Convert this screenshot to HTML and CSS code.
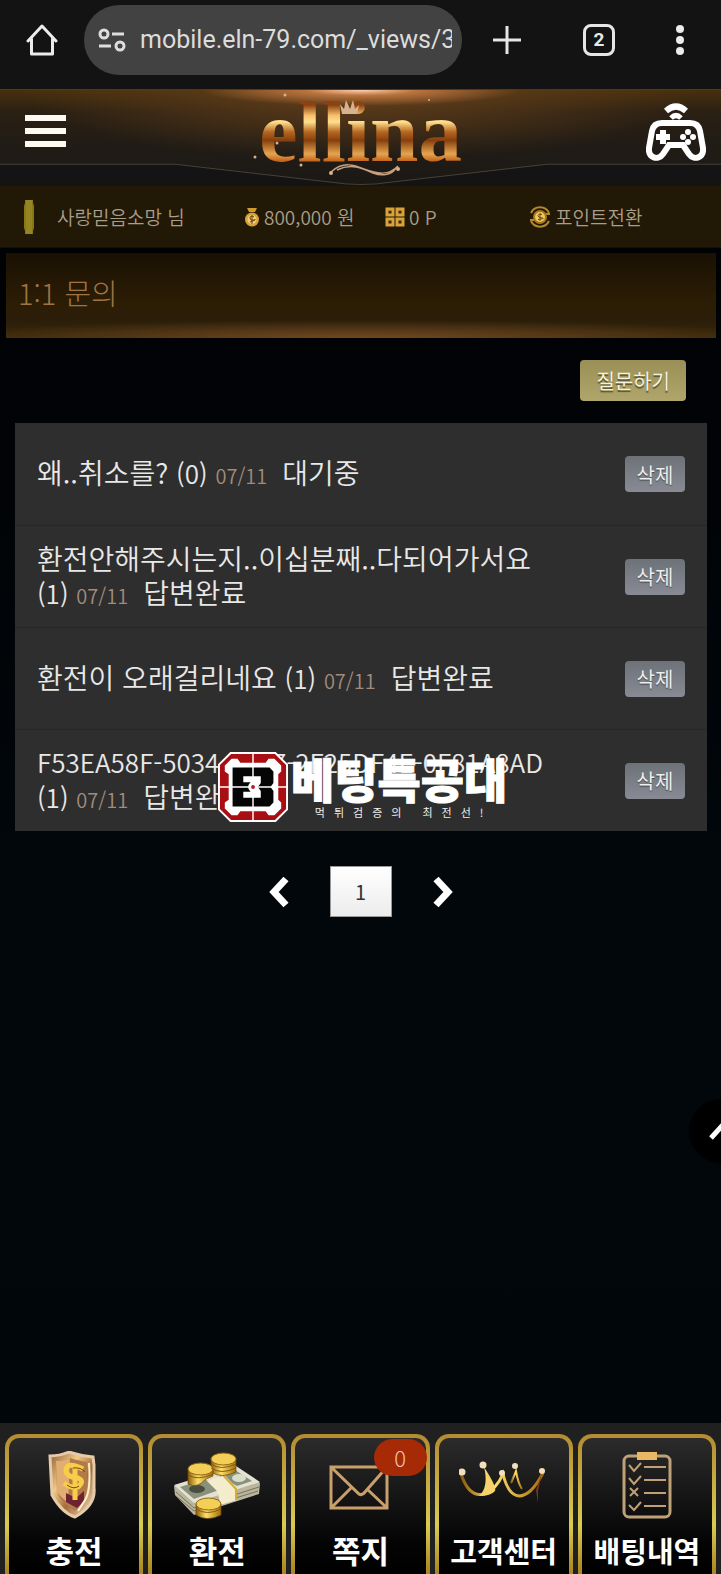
FILE: index.html
```html
<!DOCTYPE html>
<html lang="ko">
<head>
<meta charset="utf-8">
<meta name="viewport" content="width=device-width, initial-scale=1">
<title>1:1 문의</title>
<link rel="stylesheet" href="styles.css">
</head>
<body>
<div class="browser">
  <button class="icon-btn" aria-label="홈"><svg width="32" height="32" viewBox="0 0 32 32" fill="none" stroke="#ececec" stroke-width="3" stroke-linejoin="round" stroke-linecap="round"><path d="M2 17 16 2l14 15M5.500 15v15h21V15"/></svg></button>
  <div class="address">
    <svg width="28" height="24" viewBox="0 0 28 24" fill="none" stroke="#dedede" stroke-width="3"><circle cx="6" cy="6" r="4"/><path d="M14 6h12M1 18h12"/><circle cx="22" cy="18" r="4"/></svg>
    <input class="url" type="text" aria-label="주소" value="mobile.eln-79.com/_views/3">
  </div>
  <div class="browser-tools">
    <button class="icon-btn" aria-label="새 탭"><svg width="30" height="30" viewBox="0 0 30 30" stroke="#e6e6e6" stroke-width="3"><path d="M15 1v28M1 15h28"/></svg></button>
    <button class="icon-btn tabs">2</button>
    <button class="icon-btn" aria-label="메뉴"><svg width="8" height="30" viewBox="0 0 8 30" fill="#ececec"><circle cx="4" cy="4" r="4"/><circle cx="4" cy="15" r="4"/><circle cx="4" cy="26" r="4"/></svg></button>
  </div>
</div>

<header class="top">
  <svg class="top-lines" viewBox="0 0 721 97" preserveAspectRatio="none" aria-hidden="true"><path d="M0 75H175L330 93Q361 97 392 93L547 75H721V97H0Z" fill="#141414"/><path d="M0 75H175L330 93Q361 98 392 93L547 75H721" fill="none" stroke="#4a4038" stroke-width="1"/></svg>
  <button class="icon-btn" aria-label="전체 메뉴"><svg width="42" height="34" viewBox="0 0 42 34" fill="#fdfaf2"><path d="M0 0h41v6H0zM0 13h41v6H0zM0 26h41v6H0z"/></svg></button>
  <a class="logo" href="#"><span class="logo-text">ellina</span>
    <svg class="logo-art" viewBox="0 0 230 92" aria-hidden="true"><g fill="none" stroke="#c8a080"><path d="M82 82c12-11 24-7 33-3 13 5 25 7 34-3M88 80c14-7 25-2 36 3 8 3 18 3 23-5" stroke-width="1.500"/></g><g fill="#d8b28e"><path d="m91 14 4 5 2-9 4 9 3-9 2 9 4-4-2 9H93z"/><circle cx="82" cy="83" r="2"/><circle cx="149" cy="79" r="2"/><circle cx="36" cy="5" r="1.500"/><circle cx="6" cy="67" r="1.500"/><circle cx="52" cy="75" r="1.500"/><circle cx="180" cy="10" r="1"/><circle cx="28" cy="53" r="1.500"/></g></svg>
  </a>
  <button class="icon-btn" aria-label="게임"><svg width="60" height="58" viewBox="0 0 60 58" fill="none" stroke="#fff"><path d="M16 20H44C50 20 53 23 54 28L57 45C58 55 48 58 43 51L37 42H23L17 51C12 58 2 55 3 45L6 28C7 23 10 20 16 20Z" stroke-width="6"/><path d="M17 27v14M10 34h14" stroke-width="6"/><path d="M20 8Q30-1 40 8" stroke-width="6"/><path d="M25 15Q30 10 35 15" stroke-width="5"/><g fill="#fff" stroke="none"><circle cx="42" cy="29" r="3"/><circle cx="42" cy="39" r="3"/><circle cx="37" cy="34" r="3"/><circle cx="47" cy="34" r="3"/></g></svg></button>
</header>

<div class="info">
  <div class="info-item"><svg width="12" height="36" viewBox="0 0 12 36"><path d="M2 1h8v3l1 3v22l-1 3v3H2v-3l-1-3V7l1-3z" fill="#887713"/><path d="M3 1h6v34H3z" fill="#a19432" opacity=".5"/></svg><span class="member">사랑믿음소망 님</span></div>
  <div class="info-item"><svg width="16" height="20" viewBox="0 0 16 20"><path d="M3 1h10l-2 4H5z" fill="#d19b2b"/><circle cx="8" cy="12.500" r="7" fill="#d7a13c"/><circle cx="8" cy="12.500" r="4.500" fill="#f1cd73"/><path d="M10 10q-4-2-4 1t4 2-4 2M8 8v9" fill="none" stroke="#6b4208"/></svg><span>800,000 원</span></div>
  <div class="info-item"><svg width="20" height="20" viewBox="0 0 20 20"><g fill="#3b2707" stroke="#d9a33c" stroke-width="3"><path d="M2 2h6v6H2zM12 2h6v6h-6zM2 12h6v6H2zM12 12h6v6h-6z"/></g><g fill="#c99332"><circle cx="5" cy="3" r="1"/><circle cx="15" cy="3" r="1"/></g></svg><span>0 P</span></div>
  <a class="info-item" href="#"><svg width="22" height="22" viewBox="0 0 22 22" fill="none" stroke="#b4882c" stroke-width="2"><path d="M2 7A10 10 0 0 1 20 7M2 15a10 10 0 0 0 18 0M17 8h4M1 14h4"/><circle cx="11" cy="11" r="6" fill="#efc660" stroke="#a87719"/><path d="M13 8.500q-4-1-4 1t4 2.500-4 1.500M11 7v8" stroke="#6b4c10" stroke-width="1"/></svg><span>포인트전환</span></a>
</div>

<main class="main">
  <h1 class="title">1:1 문의</h1>
  <div class="actions"><button class="ask">질문하기</button></div>
  <div class="board">
    <ul class="list">
      <li class="row"><a class="subject" href="#">왜..취소를? <span class="latin">(0)</span> <span class="date">07/11</span><span class="state">대기중</span></a><button class="del">삭제</button></li>
      <li class="row"><a class="subject" href="#">환전안해주시는지..이십분째..다되어가서요 <span class="latin">(1)</span> <span class="date">07/11</span><span class="state">답변완료</span></a><button class="del">삭제</button></li>
      <li class="row"><a class="subject" href="#">환전이 오래걸리네요 <span class="latin">(1)</span> <span class="date">07/11</span><span class="state">답변완료</span></a><button class="del">삭제</button></li>
      <li class="row"><a class="subject" href="#"><span class="latin">F53EA58F-5034-4E17-2F25DF4E-0F81A8AD</span> <span class="latin">(1)</span> <span class="date">07/11</span><span class="state">답변완료</span></a><button class="del">삭제</button></li>
    </ul>
    <div class="mark">
      <svg width="70" height="70" viewBox="0 0 72 72"><path d="M13 1h46l12 12v46L59 71H13L1 59V13z" fill="#a90e12" stroke="#fff" stroke-width="2"/><path d="M14 7h6l3 4h26l3-4h6l7 7v6l-3 3v26l3 3v6l-7 7h-6l-3-4H23l-3 4h-6l-7-7v-6l4-3V23l-4-3v-6z" fill="#fff"/><path d="M15 16h38l4 4v12l-3 4 3 4v12l-4 4H15z" fill="#050505"/><path d="M26 25h18v7l-3 4 3 4v7H26v-6h7l3-5-3-5h-7z" fill="#fff"/><path d="M36 0v26M36 46v26M0 36h72" stroke="#fff" stroke-width="1.500"/><circle cx="36" cy="36" r="5" fill="#fff"/><circle cx="36" cy="36" r="2" fill="#c01530"/></svg>
      <div class="mark-words"><strong class="mark-name">베팅특공대</strong><span class="mark-tag">먹튀검증의 최전선!</span></div>
    </div>
  </div>
  <nav class="pager" aria-label="페이지">
    <button class="icon-btn" aria-label="이전"><svg width="20" height="32" viewBox="0 0 20 32" fill="none" stroke="#fff" stroke-width="7"><path d="M17 3 5 16l12 13"/></svg></button>
    <a class="page" href="#" aria-current="page">1</a>
    <button class="icon-btn" aria-label="다음"><svg width="20" height="32" viewBox="0 0 20 32" fill="none" stroke="#fff" stroke-width="7"><path d="m3 3 12 13L3 29"/></svg></button>
  </nav>
</main>

<button class="to-top" aria-label="맨 위로"><svg width="24" height="18" viewBox="0 0 24 18" fill="none" stroke="#fff" stroke-width="5"><path d="M2 16 12 5l10 11"/></svg></button>

<nav class="bottom" aria-label="바로가기">
  <a class="tile" href="#"><svg class="art" viewBox="0 0 90 68"><defs><linearGradient id="shield" x1="0" x2="1" y2="1"><stop stop-color="#8c6038"/><stop offset=".35" stop-color="#f2c985"/><stop offset=".6" stop-color="#a36a38"/><stop offset="1" stop-color="#fff0cd"/></linearGradient><linearGradient id="gold" x1="0" x2="1"><stop stop-color="#8a5a0c"/><stop offset=".4" stop-color="#ffe06a"/><stop offset="1" stop-color="#a36e0d"/></linearGradient></defs><path d="M21 5q10 0 19-4 12 4 24 5l1 8v23q2 17-19 29-13-4-23-22z" fill="url(#shield)" stroke="#e5cbaa" stroke-width="3"/><path d="M27 10q8 0 14-3 10 3 17 4v25q0 14-12 24-12-7-18-18z" fill="#b27a49"/><path d="M27 10q8 0 14-3l-2 45-11-10z" fill="#e0ae72"/><path d="M37 42l10 5 8-7v10l-7 7-11-6z" fill="#6d2233"/><path d="M54 18q-16-8-17 1 0 7 12 8 7 3 0 9-6 2-14-4M46 13v36" fill="none" stroke="#f7ce4a" stroke-width="5"/><path d="M56 21q-4-5-12-4M38 34q7 5 12 1" fill="none" stroke="#77430e" stroke-width="1"/><path d="M60 12q2 28-4 37l-7 11" fill="none" stroke="#fff0d0" stroke-width="2"/></svg><span class="label">충전</span></a>
  <a class="tile" href="#"><svg class="art" viewBox="0 0 90 68"><path d="m2 35 62-19 24 16-1 11-65 21-19-20z" fill="#b9b69d"/><path d="m2 34 62-19 24 16-66 21z" fill="#e4e2d2"/><path d="m8 36 25-8 14 11-25 9zM58 19l5 0 17 11-15 5-18-10z" fill="#89917d"/><ellipse cx="25" cy="38" rx="8" ry="4" fill="#474e40"/><ellipse cx="67" cy="27" rx="7" ry="4" fill="#d9decb"/><path d="m4 41 18 16 65-21M4 45l18 15 64-20" fill="none" stroke="#77745f" stroke-width="1"/><path d="m35 30 18-6 12 14v11l-17 5-2-13z" fill="#f4edcc"/><path d="m51 24 13 14v11" fill="none" stroke="#d1ae3c" stroke-width="2"/><g fill="url(#gold)" stroke="#6c4707" stroke-width=".700"><path d="M39 8v13q10 7 25 0V8z"/><path d="M16 18v15q9 5 18-5l7-3v-7z"/><path d="M24 53v11q11 7 25 0V53z"/></g><g fill="#f4cf58" stroke="#8f6810"><ellipse cx="51.500" cy="8" rx="12.500" ry="6"/><ellipse cx="28.500" cy="18" rx="12.500" ry="6"/><ellipse cx="36.500" cy="53" rx="12.500" ry="6"/></g><path d="M39 13q10 7 25 0M39 17q10 7 25 0M16 24q10 6 25-1M24 58q11 7 25 0" fill="none" stroke="#875a09"/></svg><span class="label">환전</span></a>
  <a class="tile" href="#"><svg class="art" viewBox="0 0 90 68"><path d="M16 16h56v41H16zM17 17l27 26q3 2 6-2l21-24M17 56l20-20M71 56 52 38" fill="none" stroke="#c9a06c" stroke-width="3"/></svg><span class="label">쪽지</span><span class="badge">0</span></a>
  <a class="tile" href="#"><svg class="art" viewBox="0 0 90 68"><g fill="none" stroke="url(#gold)" stroke-width="3"><path d="M2 23Q10 47 25 43q12-4 19-20 5 21 16 22 12 0 24-23"/><path d="m52 32 5-12q2 12 6 18" stroke-width="2"/></g><path d="M25 16q13 20 11 24-4 5-16 5 10-9 5-29z" fill="#f5d36c"/><path d="m83 22-4 18v12l-2-13z" fill="#7c351e"/><g fill="#f2dfbd"><circle cx="3" cy="21" r="3.500"/><circle cx="24" cy="14" r="3.500"/><circle cx="43" cy="22" r="3"/><circle cx="56" cy="15" r="3"/><circle cx="83" cy="20" r="3"/></g></svg><span class="label tight">고객센터</span></a>
  <a class="tile" href="#"><svg class="art" viewBox="0 0 90 68"><rect x="22" y="5" width="46" height="61" rx="5" fill="none" stroke="#bda178" stroke-width="3"/><path d="M35 1h20v8H35z" fill="#e8b864"/><g fill="none" stroke="#c1a075" stroke-width="2"><path d="M42 16h22M42 29h22M42 42h22M42 55h22"/><path d="m27 14 5 6 7-8M27 27l5 6 7-8M28 37l8 8m0-8-8 8M27 54l5 5 7-8"/></g></svg><span class="label tight">배팅내역</span></a>
</nav>
</body>
</html>
```

FILE: styles.css
```css
* { box-sizing: border-box; }
body {
  margin: 0;
  min-height: 100vh;
  display: flex;
  flex-direction: column;
  position: relative;
  overflow-x: hidden;
  background: linear-gradient(#000002 0, #010306 420px, #01070b 900px, #01060b 100%);
  color: #e8e8e8;
  font-family: "Noto Sans CJK KR", sans-serif;
}
a { color: inherit; text-decoration: none; }
button { font: inherit; color: inherit; border: 0; padding: 0; cursor: pointer; }
svg { display: block; flex: none; }
.icon-btn { background: none; }

.browser {
  display: flex;
  align-items: center;
  height: 89px;
  padding: 0 37px 10px 26px;
  background: #131313;
}
.address {
  flex: 0 1 378px;
  min-width: 0;
  display: flex;
  align-items: center;
  gap: 14px;
  height: 70px;
  margin-left: 26px;
  padding: 0 10px 0 14px;
  border-radius: 35px;
  background: #424242;
}
.url {
  flex: 1;
  min-width: 0;
  padding: 0;
  border: 0;
  outline: 0;
  background: none;
  color: #dcdcdc;
  font: 25px Roboto, sans-serif;
}
.browser-tools { flex: 1; display: flex; align-items: center; justify-content: space-between; padding-left: 30px; }
.tabs {
  width: 32px;
  height: 32px;
  border: 3px solid #e6e6e6;
  border-radius: 8px;
  font: bold 19px Roboto, sans-serif;
}

.top {
  position: relative;
  display: flex;
  align-items: center;
  justify-content: space-between;
  height: 97px;
  padding: 0 15px 12px 25px;
  border-top: 1px solid #493a2b;
  background:
    radial-gradient(ellipse 160px 16px at 50% 0, #ffd0ae 0, #b9733d 35%, transparent 100%),
    radial-gradient(ellipse 340px 70px at 50% 0, #65401b 0, transparent 100%),
    linear-gradient(#48300d 0, #2b2013 22%, #211c15 55%, #1b1815 100%);
}
.top-lines { position: absolute; inset: 0; width: 100%; height: 100%; }
.top > .icon-btn, .logo { position: relative; }
.logo { margin-left: 8px; }
.logo-text {
  display: block;
  font: bold 87px/84px "Liberation Serif", serif;
  background: linear-gradient(#8d4211 18%, #f6bd69 30%, #ffe08e 38%, #b56620 50%, #87400d 60%, #e4a54f 76%, #c76820 84%);
  -webkit-background-clip: text;
  background-clip: text;
  color: transparent;
}
.logo-art { position: absolute; left: -10px; top: 0; width: 230px; height: 92px; }

.info {
  display: grid;
  grid-template-columns: 221px 141px 144px 1fr;
  align-items: center;
  height: 62px;
  padding-left: 23px;
  background: #221806;
  border-bottom: 1px solid #171003;
  color: #a99e89;
  font-size: 19px;
  font-weight: 350;
}
.info-item { display: flex; align-items: center; gap: 4px; white-space: nowrap; }
.member { margin-left: 18px; }

.title {
  margin: 5px 5px 0 6px;
  height: 85px;
  padding: 0 12px;
  font-size: 29px;
  font-weight: 300;
  line-height: 78px;
  color: #a07543;
  background:
    radial-gradient(ellipse 60% 18px at 50% 100%, #704822 0, transparent 100%),
    linear-gradient(#1a1103, #2c1d05 60%, #2b1e0a 80%, #3b2808);
}
.actions { display: flex; justify-content: flex-end; padding: 22px 35px; }
.ask {
  height: 41px;
  padding: 0 16px;
  border-radius: 4px;
  background: linear-gradient(#9a9057, #b0a66a);
  color: #f4f1df;
  font-size: 20px;
  text-shadow: 0 2px 1px #55502f;
}
.board { position: relative; margin: 0 14px 0 15px; }
.list { margin: 0; padding: 0; list-style: none; background: #2e2e2e; }
.row {
  display: flex;
  align-items: center;
  justify-content: space-between;
  height: 102px;
  padding: 0 22px;
}
.row + .row { border-top: 1px solid #272727; }
.subject { width: 530px; font-size: 28px; font-weight: 350; line-height: 34px; }
.latin { font-size: 26px; }
.date { color: #a28c7b; font-size: 20px; }
.state { margin-left: 15px; }
.del {
  width: 60px;
  height: 36px;
  border-radius: 4px;
  background: linear-gradient(#6d7178, #888b93);
  color: #eee;
  font-size: 20px;
  text-shadow: 0 1px 1px #444;
}
.mark { position: absolute; left: 50%; bottom: 9px; margin-left: -143px; display: flex; gap: 3px; align-items: flex-start; }
.mark-words { display: flex; flex-direction: column; align-items: center; }
.mark-name { font: 900 47px/52px "Noto Sans CJK KR", sans-serif; color: #fff; -webkit-text-stroke: 1px #fff; white-space: nowrap; }
.mark-tag { margin-left: 9px; font: 400 11px/16px "Noto Sans CJK KR", sans-serif; letter-spacing: 9px; color: #eee; white-space: nowrap; }

.pager { display: flex; justify-content: center; align-items: center; gap: 41px; margin-top: 35px; }
.page {
  width: 62px;
  height: 51px;
  border: 1px solid #999;
  background: linear-gradient(#fff, #ececec);
  color: #333;
  font-size: 20px;
  line-height: 49px;
  text-align: center;
}
.to-top {
  position: absolute;
  right: -32px;
  top: 1099px;
  width: 64px;
  height: 64px;
  border-radius: 50%;
  background: #000;
  display: grid;
  place-items: center;
}

.bottom {
  display: grid;
  grid-template-columns: repeat(5, 1fr);
  gap: 5px;
  margin-top: auto;
  height: 151px;
  padding: 11px 5px 0;
  background: #202020;
}
.tile {
  position: relative;
  display: flex;
  flex-direction: column;
  align-items: center;
  padding-top: 13px;
  border: 4px solid transparent;
  border-bottom: 0;
  border-radius: 14px 14px 0 0;
  background:
    linear-gradient(#2b2b2b, #050505 75%, #000) padding-box,
    linear-gradient(#b38b32, #d8cb50 65%, #a88420) border-box;
}
.art { width: 90px; height: 68px; }
.label { margin-top: 8px; font: 700 31px/46px "Noto Sans CJK KR", sans-serif; color: #fff; white-space: nowrap; }
.tight { font-size: 29px; }
.badge {
  position: absolute;
  right: -1px;
  top: 1px;
  width: 53px;
  height: 37px;
  border-radius: 19px;
  background: #a72a07;
  color: #f0c0a8;
  font-size: 22px;
  font-weight: 300;
  line-height: 36px;
  text-align: center;
}
```
